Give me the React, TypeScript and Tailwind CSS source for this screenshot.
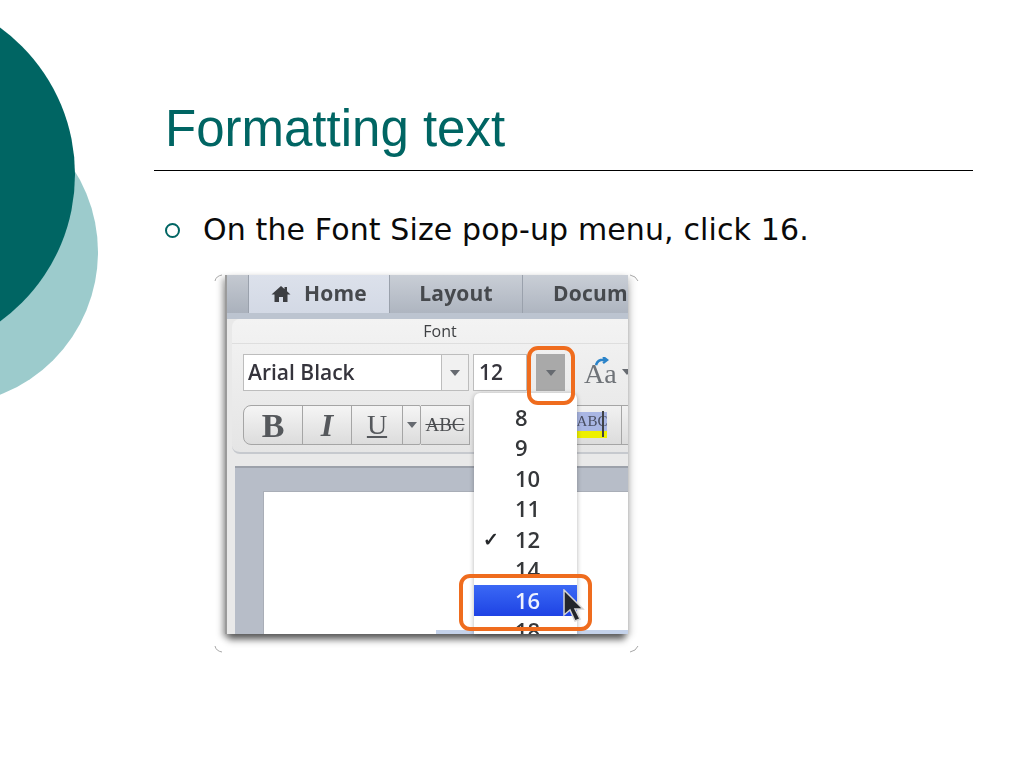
function Caret({ className = "" }: { className?: string }) {
  return (
    <svg width="10" height="6" viewBox="0 0 10 6" className={`shrink-0 ${className}`}>
      <path d="M0 0h10L5 6z" fill="#666a70" />
    </svg>
  );
}

function Tab({ label, width, active, icon }: { label: string; width: string; active?: boolean; icon?: boolean }) {
  return (
    <div
      className={`${width} flex shrink-0 items-center justify-center gap-[13px] border-r border-[#9aa1ac] text-[21px] font-bold tracking-[0.2px] text-[#46494d] ${
        active ? "bg-gradient-to-b from-[#dce1eb] to-[#d3d9e5]" : "bg-gradient-to-b from-[#c9ced6] to-[#aeb5c0]"
      }`}
    >
      {icon && (
        <svg width="20" height="18" viewBox="0 0 20 18">
          <path d="M10 1L0.5 9.5h3V17h4.5v-5h4v5H16.500V9.500h3L16 6.300V2h-2.500v2z" fill="#3c3e42" />
        </svg>
      )}
      <span>{label}</span>
    </div>
  );
}

function MenuItem({ n, selected, checked }: { n: string; selected?: boolean; checked?: boolean }) {
  return (
    <div
      className={`relative flex h-[30.500px] shrink-0 items-center pl-[41px] text-[22px] font-semibold ${
        selected ? "bg-gradient-to-b from-[#3b68f5] to-[#1f42e4] text-[#eef2ff]" : "text-[#35373a]"
      }`}
    >
      {checked && <span className="absolute left-[9px] text-[19px] font-bold text-[#26282b]">✓</span>}
      {n}
    </div>
  );
}

function ToolButton({ width, children }: { width: string; children: React.ReactNode }) {
  return <div className={`${width} flex shrink-0 items-center justify-center border-r border-[#a5a5a5]`}>{children}</div>;
}

function Screenshot() {
  return (
    <div className="relative ml-[225px] mt-[25px] h-[359px] w-[403px] shadow-[-3px_3px_6px_rgba(0,0,0,0.3),4px_2px_6px_rgba(0,0,0,0.12),0_9px_7px_-3px_rgba(0,0,0,0.45)]">
      <div className="flex h-full w-full flex-col overflow-hidden border-l-2 border-[#9b9b9b] bg-[#e9e9e9] font-['Open_Sans','Liberation_Sans',sans-serif] blur-[0.7px]">
        <div className="flex h-[38px] shrink-0">
          <div className="w-[22px] shrink-0 border-r border-[#9aa1ac] bg-gradient-to-b from-[#c4c9d1] to-[#aab1bc]" />
          <Tab label="Home" width="w-[141px]" active icon />
          <Tab label="Layout" width="w-[133px]" />
          <div className="flex min-w-0 flex-1 items-center overflow-hidden bg-gradient-to-b from-[#c9ced6] to-[#aeb5c0] pl-[30px] text-[21px] font-bold tracking-[0.2px] text-[#46494d]">
            Docum
          </div>
        </div>
        <div className="h-[6px] shrink-0 bg-[#bcc4d0]" />
        <div className="ml-[5px] flex h-[135px] shrink-0 flex-col rounded-tl-[8px] rounded-bl-[8px] border-b-2 border-[#c6c9ce] bg-gradient-to-b from-[#f3f3f3] to-[#e5e5e5]">
          <div className="flex h-[25px] shrink-0 items-center justify-center border-b border-[#dedede] pl-[20px] text-[16px] font-medium text-[#3f4144]">
            Font
          </div>
          <div className="ml-[11px] mt-[10px] flex h-[37px] shrink-0 items-stretch">
            <div className="flex w-[199px] shrink-0 items-center border border-[#bdbdbd] bg-white pl-[4px] text-[21px] font-semibold text-[#35343c]">
              Arial Black
            </div>
            <div className="flex w-[27px] shrink-0 items-center justify-center border-y border-r border-[#bdbdbd] bg-[#f1f1f1]">
              <Caret />
            </div>
            <div className="ml-[4px] flex w-[54px] shrink-0 items-center border border-[#bdbdbd] bg-white pl-[5px] text-[21px] font-semibold text-[#35343c]">
              12
            </div>
            <div className="ml-[9px] flex w-[29px] shrink-0 items-center justify-center bg-[#a9a9a9]">
              <Caret />
            </div>
            <div className="relative ml-[19px] flex w-[28px] shrink-0 items-end font-['Liberation_Serif',serif] text-[28px] leading-[34px] text-[#6f7378]">
              Aa
              <svg width="14" height="10" viewBox="0 0 14 10" className="absolute left-[11px] top-[3px]">
                <path d="M1 8Q3 2 10 3M8 0l4 3-4 3" fill="none" stroke="#2a83c9" strokeWidth="2.500" />
              </svg>
            </div>
            <Caret className="ml-[10px] mt-[15px]" />
          </div>
          <div className="ml-[11px] mt-[14px] flex h-[40px] w-[178px] shrink-0 overflow-hidden rounded-l-[8px] rounded-r-[2px] border border-[#a5a5a5] bg-gradient-to-b from-[#f5f5f5] to-[#dcdcdc] font-['Liberation_Serif',serif] text-[#55585c]">
            <ToolButton width="w-[59px]">
              <span className="text-[34px] font-bold">B</span>
            </ToolButton>
            <ToolButton width="w-[49px]">
              <span className="text-[32px] font-bold italic">I</span>
            </ToolButton>
            <ToolButton width="w-[51px]">
              <span className="text-[28px] underline">U</span>
            </ToolButton>
            <div className="flex flex-1 items-center justify-center">
              <Caret />
            </div>
          </div>
        </div>
        <div className="ml-[8px] flex flex-1 flex-col pt-[12px]">
          <div className="flex h-full flex-col border-t-2 border-[#9ca1aa] bg-[#b7bdc8] pl-[28px] pt-[23px]">
            <div className="flex-1 border-l border-t border-[#a9aeb7] bg-white" />
          </div>
        </div>
      </div>

      {/* Detached toolbar pieces that sit beside the menu */}
      <div className="absolute left-[196px] top-[130px] flex h-[40px] w-[49px] items-center justify-center border-y border-r border-[#a5a5a5] bg-gradient-to-b from-[#f5f5f5] to-[#dcdcdc] font-['Liberation_Serif',serif] text-[19px] text-[#4b4d50] line-through blur-[0.6px]">
        ABC
      </div>
      <div className="absolute left-[352px] top-[130px] flex h-[40px] w-[51px] items-center gap-[14px] border-y border-[#a5a5a5] bg-gradient-to-b from-[#f1f1f1] to-[#dcdcdc] blur-[0.6px]">
        <div className="relative flex h-[26px] w-[30px] flex-col justify-end">
          <div className="flex h-[19px] items-center justify-center bg-[#a9b6e3] font-['Liberation_Serif',serif] text-[15px] text-[#4a4f63]">
            ABC
          </div>
          <div className="h-[7px] bg-[#eef000]" />
          <div className="absolute right-[3px] top-[-1px] h-[26px] w-[2px] bg-[#3f4144]" />
        </div>
        <div className="h-full w-px bg-[#a5a5a5]" />
      </div>
      <div className="absolute bottom-0 right-0 h-[4px] w-[192px] bg-[#c4d2ea]" />

      {/* Font size pop-up menu */}
      <div className="absolute left-[249px] top-[118px] flex h-[241px] w-[103px] flex-col overflow-hidden rounded-t-[6px] bg-white pt-[9px] font-['Open_Sans','Liberation_Sans',sans-serif] shadow-[0_1px_5px_rgba(0,0,0,0.3)] blur-[0.6px]">
        <MenuItem n="8" />
        <MenuItem n="9" />
        <MenuItem n="10" />
        <MenuItem n="11" />
        <MenuItem n="12" checked />
        <MenuItem n="14" />
        <MenuItem n="16" selected />
        <MenuItem n="18" />
      </div>

      {/* Orange call-outs */}
      <div className="absolute left-[302px] top-[71px] h-[59px] w-[48px] rounded-[11px] border-[4px] border-[#ef6c1e]" />
      <div className="absolute left-[234px] top-[299px] h-[57px] w-[133px] rounded-[11px] border-[4px] border-[#ef6c1e]" />

      {/* Pointer */}
      <svg width="24" height="34" viewBox="0 0 24 34" className="absolute left-[337px] top-[314px]">
        <path d="M2 1v25l6-5 5 11 5-2-5-10h8z" fill="#23262b" stroke="#d5d5d5" strokeWidth="1.500" />
      </svg>

      {/* Picture corner marks */}
      <svg width="10" height="8" viewBox="0 0 10 8" className="absolute left-[-11px] top-[-1px]">
        <path d="M1 7Q2 2 8 1" fill="none" stroke="#a8a8a8" />
      </svg>
      <svg width="10" height="8" viewBox="0 0 10 8" className="absolute right-[-11px] top-[-1px]">
        <path d="M1 1Q7 2 9 7" fill="none" stroke="#a8a8a8" />
      </svg>
      <svg width="10" height="8" viewBox="0 0 10 8" className="absolute bottom-[-19px] left-[-11px]">
        <path d="M1 1Q2 6 8 7" fill="none" stroke="#a8a8a8" />
      </svg>
      <svg width="10" height="8" viewBox="0 0 10 8" className="absolute bottom-[-19px] right-[-11px]">
        <path d="M9 1Q7 6 1 7" fill="none" stroke="#a8a8a8" />
      </svg>
    </div>
  );
}

export default function App() {
  return (
    <div className="relative h-[768px] w-[1024px] overflow-hidden bg-white font-['Liberation_Sans',sans-serif]">
      <div className="absolute left-[-208px] top-[99px] h-[306px] w-[306px] rounded-full bg-[#9ccbcc]" />
      <div className="absolute left-[-288px] top-[-7px] h-[363px] w-[363px] rounded-full bg-[#006563]" />
      <div className="relative pt-[97px]">
        <div className="ml-[154px] w-[819px] border-b-[1.500px] border-black pl-[11px] pb-[9px]">
          <h1 className="text-[51px] font-normal leading-[64px] text-[#006563]">Formatting text</h1>
        </div>
        <div className="ml-[165px] mt-[39px] flex h-[40px] items-center">
          <div className="h-[15px] w-[15px] shrink-0 rounded-full border-2 border-[#006563]" />
          <p className="ml-[23px] font-['DejaVu_Sans',sans-serif] text-[30px] leading-[40px] tracking-[0.13px] text-[#0a0a0a]">
            On the Font Size pop-up menu, click 16.
          </p>
        </div>
        <Screenshot />
      </div>
    </div>
  );
}
